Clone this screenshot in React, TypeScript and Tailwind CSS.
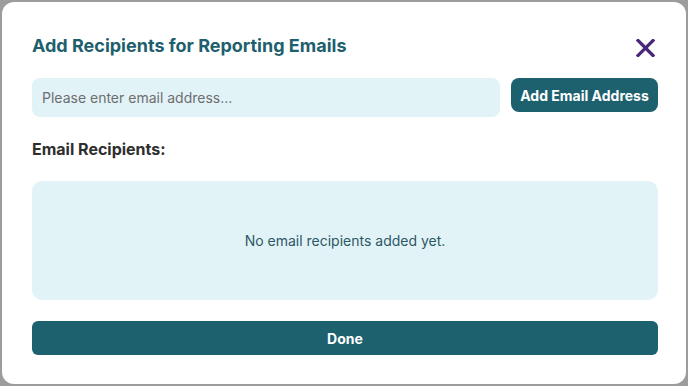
export default function App() {
  return (
    <div className="w-[688px] h-[386px] bg-[#9c9c9c] p-[2px] font-['Inter',sans-serif]">
      <div className="w-full h-full bg-white rounded-[12px] pl-[30px] pr-[28px] pt-[32px]">
        <div className="flex items-center justify-between h-[24px]">
          <h2 className="text-[18px] leading-[24px] font-bold text-[#1e5f6e]">Add Recipients for Reporting Emails</h2>
          <button className="mr-[3px] mt-[4px]">
            <svg width="19" height="18" viewBox="0 0 19 18">
              <path d="M2 1.5 L17 16.5 M17 1.5 L2 16.5" stroke="#4b2778" strokeWidth="3.2" strokeLinecap="square" />
            </svg>
          </button>
        </div>
        <div className="flex items-start gap-[11px] mt-[20px]">
          <input
            className="flex-1 h-[39px] rounded-[8px] bg-[#e2f3f8] px-[10px] text-[14px] text-[#333] placeholder:text-[#6e6e6e] outline-none"
            placeholder="Please enter email address..."
          />
          <button className="w-[147px] h-[34px] rounded-[8px] bg-[#1d616f] text-white text-[14px] font-bold">
            Add Email Address
          </button>
        </div>
        <div className="mt-[21px] text-[16px] leading-[22px] font-bold text-[#2e2e2e]">Email Recipients:</div>
        <div className="mt-[21px] h-[119px] rounded-[10px] bg-[#e2f3f8] flex items-center justify-center text-[14px] text-[#2d5865]">
          No email recipients added yet.
        </div>
        <button className="mt-[21px] w-full h-[34px] rounded-[6px] bg-[#1d616f] text-white text-[14px] font-bold">
          Done
        </button>
      </div>
    </div>
  );
}
